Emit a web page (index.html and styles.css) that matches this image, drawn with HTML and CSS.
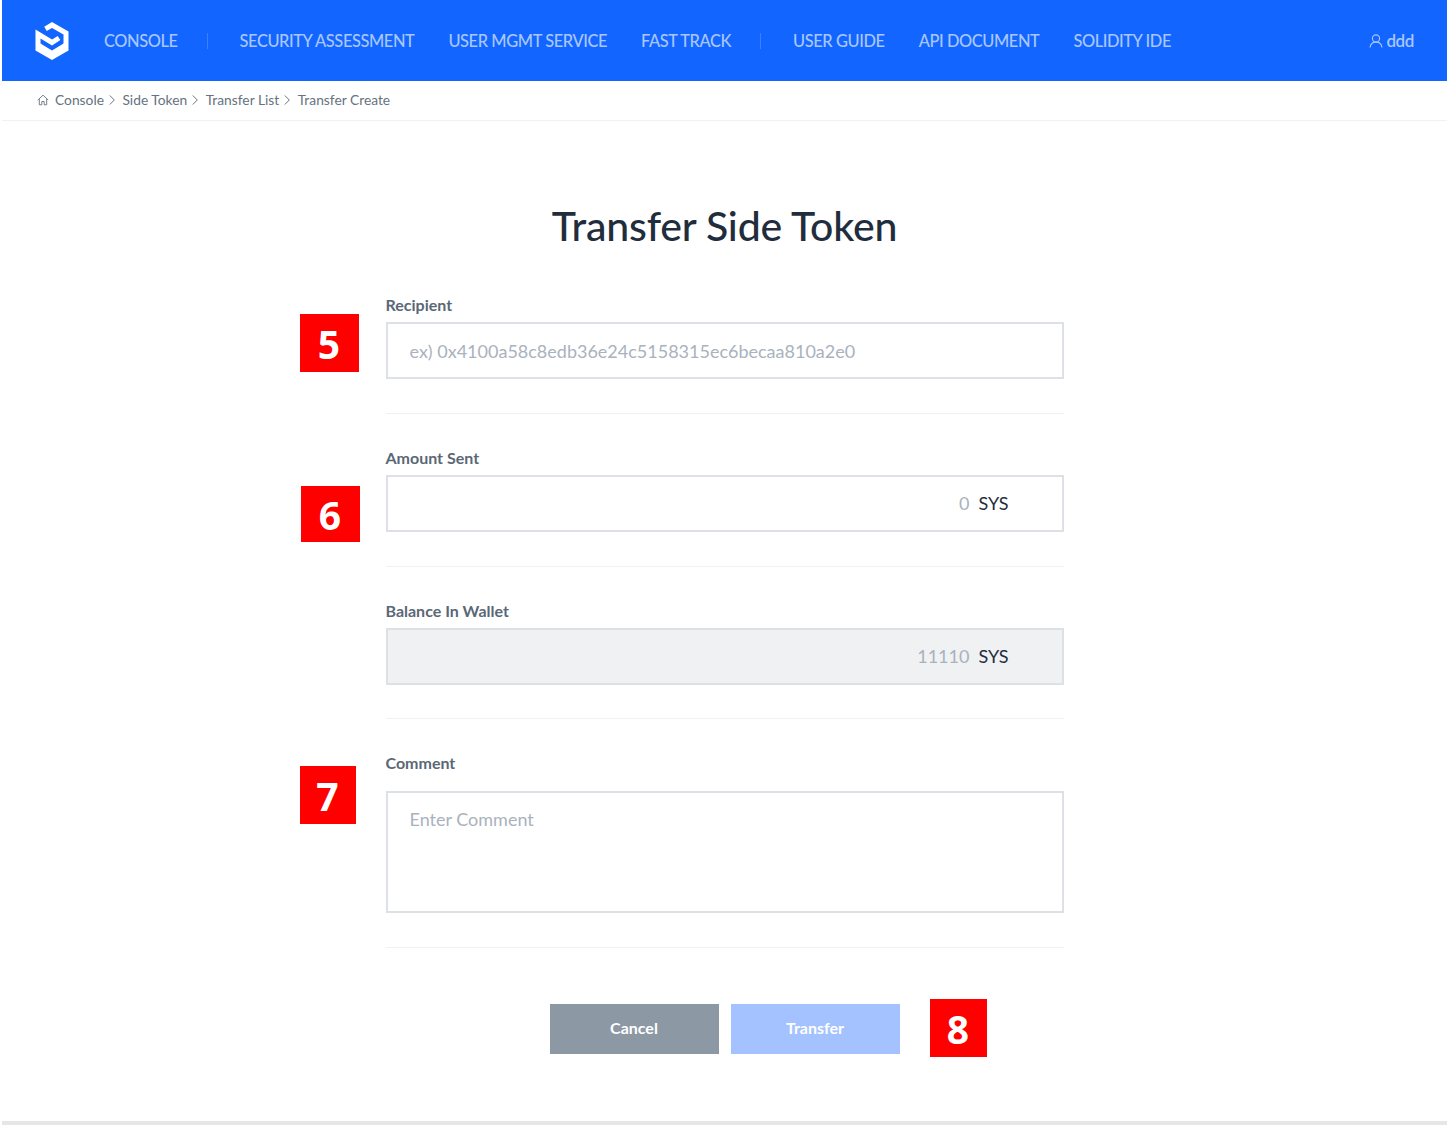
FILE: index.html
```html
<!DOCTYPE html>
<html lang="en">
<head>
  <meta charset="UTF-8">
  <meta name="viewport" content="width=device-width, initial-scale=1.0">
  <title>Transfer Side Token</title>
  <link rel="stylesheet" href="styles.css">
</head>
<body>
  <div class="page">
    <div class="header">
      <svg class="logo" viewBox="0 0 34 38" width="34" height="38">
        <path d="M3 20 L17 28.500 L31 20 V27 L17 35 L3 27 Z" fill="#fff"/>
        <path d="M10.500 6.800 L17 3 L31 11 V27 L17 35 L3 27 V12 L17 20.500 L24 16" fill="none" stroke="#fff" stroke-width="5"/>
        <path d="M8.500 21.500 L17 26.500 L25.500 21.500" fill="none" stroke="#1266ff" stroke-width="1.800"/>
      </svg>
      <div class="nav">
        <a>CONSOLE</a>
        <span class="sep"></span>
        <a>SECURITY ASSESSMENT</a>
        <a>USER MGMT SERVICE</a>
        <a>FAST TRACK</a>
        <span class="sep"></span>
        <a>USER GUIDE</a>
        <a>API DOCUMENT</a>
        <a>SOLIDITY IDE</a>
      </div>
      <div class="user">
        <svg viewBox="0 0 14 14" width="14" height="14" fill="none" stroke="#a9c6ff" stroke-width="1.100">
          <circle cx="7" cy="4.500" r="3.600"/>
          <path d="M1 13.500 C1.500 10 4 8.100 7 8.100 C10 8.100 12.500 10 13 13.500"/>
        </svg>
        <span>ddd</span>
      </div>
    </div>

    <div class="breadcrumb">
      <svg class="home" viewBox="0 0 12 12" width="12" height="12" fill="none" stroke="#66727f" stroke-width="0.900">
        <path d="M0.800 6 L6 1.200 L11.200 6"/>
        <path d="M2.300 5 V10.800 H4.800 V7.500 H7.200 V10.800 H9.700 V5"/>
      </svg>
      <span>Console</span>
      <svg class="chev" viewBox="0 0 6 10" width="6" height="10"><path d="M0.800 0.500 L5.300 5 L0.800 9.500" fill="none" stroke="#66727f"/></svg>
      <span>Side Token</span>
      <svg class="chev" viewBox="0 0 6 10" width="6" height="10"><path d="M0.800 0.500 L5.300 5 L0.800 9.500" fill="none" stroke="#66727f"/></svg>
      <span>Transfer List</span>
      <svg class="chev" viewBox="0 0 6 10" width="6" height="10"><path d="M0.800 0.500 L5.300 5 L0.800 9.500" fill="none" stroke="#66727f"/></svg>
      <span>Transfer Create</span>
    </div>

    <div class="content">
      <h1>Transfer Side Token</h1>

      <div class="form">
        <div class="form-group">
          <label>Recipient</label>
          <div class="field placeholder">ex) 0x4100a58c8edb36e24c5158315ec6becaa810a2e0</div>
          <div class="badge badge-5">5</div>
        </div>

        <div class="form-group">
          <label>Amount Sent</label>
          <div class="field amount"><span class="num">0</span><span class="unit">SYS</span></div>
          <div class="badge badge-6">6</div>
        </div>

        <div class="form-group group-balance">
          <label>Balance In Wallet</label>
          <div class="field amount disabled"><span class="num">11110</span><span class="unit">SYS</span></div>
        </div>

        <div class="form-group">
          <label class="label-comment">Comment</label>
          <div class="field textarea placeholder">Enter Comment</div>
          <div class="badge badge-7">7</div>
        </div>

        <div class="buttons">
          <button class="btn-cancel">Cancel</button>
          <button class="btn-transfer">Transfer</button>
          <div class="badge badge-8">8</div>
        </div>
      </div>
    </div>

    <div class="footer"></div>
  </div>
</body>
</html>
```

FILE: styles.css
```css
* {
  box-sizing: border-box;
  margin: 0;
  padding: 0;
}

body {
  font-family: Lato, Arial, sans-serif;
  background: #fff;
  color: #1f2d3d;
}

.page {
  position: relative;
  height: 1125px;
  overflow: hidden;
  margin-left: 2px;
  display: flex;
  flex-direction: column;
}

/* Header */
.header {
  height: 81px;
  flex: none;
  background: #1266ff;
  display: flex;
  align-items: center;
  padding: 0 33px;
}

.logo {
  flex: none;
  margin-right: 35px;
}

.nav {
  display: flex;
  align-items: center;
  gap: 34px;
  font-size: 16.4px;
  letter-spacing: -0.4px;
  font-weight: 500;
  color: #a9c6ff;
  white-space: nowrap;
}

.sep {
  width: 1px;
  height: 16px;
  margin: 0 -2px 0 -5px;
  background: #3b80ff;
}

.user {
  margin-left: auto;
  display: flex;
  align-items: center;
  gap: 3px;
  font-size: 17px;
  font-weight: 600;
  letter-spacing: -0.4px;
  color: #a9c6ff;
}

/* Breadcrumb */
.breadcrumb {
  height: 40px;
  flex: none;
  display: flex;
  align-items: center;
  padding-left: 35px;
  padding-bottom: 2px;
  border-bottom: 1px solid #eff1f3;
  font-size: 13.8px;
  color: #66727f;
}

.home {
  margin-right: 6px;
}

.chev {
  margin: 0 7.500px 0 5px;
}

/* Form */
.content {
  flex: 1;
  display: flex;
  flex-direction: column;
  align-items: center;
}

h1 {
  font-size: 41px;
  font-weight: 500;
  line-height: 52px;
  letter-spacing: -0.2px;
  color: #1f2d3d;
  margin-top: 79px;
  margin-bottom: 43px;
}

.form {
  width: 678px;
}

.form-group {
  position: relative;
  padding-bottom: 34px;
  margin-bottom: 34px;
  border-bottom: 1px solid #eff1f3;
}

.group-balance {
  padding-bottom: 33px;
}

label {
  display: block;
  font-size: 16px;
  line-height: 20px;
  font-weight: 700;
  color: #5a6876;
  margin-bottom: 7px;
}

.label-comment {
  margin-bottom: 18px;
}

.field {
  height: 57px;
  border: 2px solid #dde1e6;
  padding: 0 22px;
  display: flex;
  align-items: center;
  font-size: 18px;
  background: #fff;
}

.placeholder {
  color: #a9b2bd;
}

.amount {
  justify-content: flex-end;
  padding-right: 53px;
  padding-bottom: 2px;
}

.disabled {
  background: #eff1f3;
}

.num {
  color: #a9b2bd;
  margin-right: 9px;
}

.unit {
  color: #1f2d3d;
}

.textarea {
  height: 122px;
  align-items: flex-start;
  padding-top: 15px;
}

.buttons {
  position: relative;
  display: flex;
  justify-content: center;
  gap: 12px;
  padding-top: 22px;
}

button {
  width: 169px;
  height: 50px;
  padding-bottom: 3px;
  border: none;
  font-family: inherit;
  font-size: 16px;
  font-weight: 700;
  color: #fff;
}

.btn-cancel {
  background: #8c98a4;
}

.btn-transfer {
  background: #a3c2ff;
}

/* Annotation badges */
.badge {
  position: absolute;
  width: 59px;
  height: 58px;
  background: #ff0000;
  color: #fff;
  font-family: "Open Sans", sans-serif;
  font-size: 39px;
  font-weight: 700;
  display: flex;
  align-items: center;
  justify-content: center;
}

.badge-5 {
  left: -86px;
  top: 19px;
}

.badge-6 {
  left: -85px;
  top: 38px;
  height: 56px;
}

.badge-7 {
  left: -86px;
  top: 13px;
  width: 56px;
}

.badge-8 {
  left: 544px;
  top: 17px;
  width: 57px;
}

.footer {
  position: absolute;
  left: 0;
  right: 0;
  bottom: 0;
  height: 4px;
  background: #e6e6e6;
}
```
